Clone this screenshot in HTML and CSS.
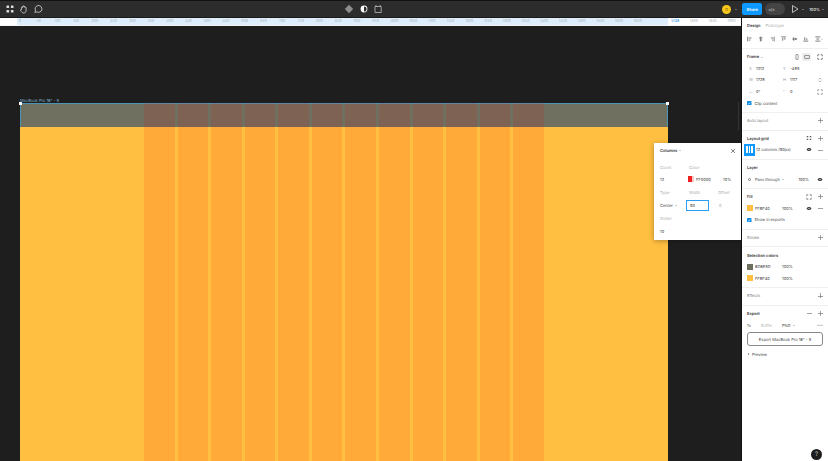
FILE: index.html
```html
<!DOCTYPE html>
<html lang="en">
<head>
  <meta charset="UTF-8">
  <title>MacBook Pro 16" - 5</title>
  <link rel="stylesheet" href="styles.css">
</head>
<body>
<div class="app">
  <header class="toolbar">
    <div class="tools">
      <svg class="ic" viewBox="0 0 10 10"><g fill="#ddd"><rect x="1.500" y="1.500" width="2.600" height="2.600" rx=".6"/><rect x="5.900" y="1.500" width="2.600" height="2.600" rx=".6"/><rect x="1.500" y="5.900" width="2.600" height="2.600" rx=".6"/><rect x="5.900" y="5.900" width="2.600" height="2.600" rx=".6"/></g></svg>
      <svg class="ic" viewBox="0 0 10 10"><path d="M2.500 5.500V3.600c0-.8 1-.8 1.100 0V2.400c0-.8 1.200-.8 1.200 0v.6c0-.8 1.200-.8 1.200 0v.7c0-.7 1.100-.7 1.100 0v2.500C7.100 8 6 9 4.800 9 3.200 9 2.600 8 1.500 6.400c-.4-.7.500-1.200 1-.9z" fill="none" stroke="#ddd" stroke-width=".8"/></svg>
      <svg class="ic" viewBox="0 0 10 10"><path d="M1.800 8.400l.7-1.900a3.400 3.400 0 1 1 1.200 1.300z" fill="none" stroke="#ddd" stroke-width=".8"/></svg>
    </div>
    <div class="tools center">
      <svg class="ic" viewBox="0 0 10 10"><path d="M5 .8L9.200 5 5 9.200.8 5z" fill="#8c8c8c"/></svg>
      <svg class="ic" viewBox="0 0 10 10"><circle cx="5" cy="5" r="3.400" fill="#fff"/><path d="M5 2.400a2.600 2.600 0 0 1 0 5.200z" fill="#2c2c2c"/></svg>
      <svg class="ic" viewBox="0 0 10 10"><path d="M2 2.500h6.200v6H2z" fill="none" stroke="#bbb" stroke-width=".8"/><path d="M3 1v2M7.200 1v2" stroke="#bbb" stroke-width=".8"/></svg>
    </div>
    <div class="session">
      <span class="avatar">D</span>
      <span class="caret light"></span>
      <span class="share">Share</span>
      <span class="code">&lt;/&gt;</span>
      <svg class="ic play" viewBox="0 0 10 10"><path d="M2.500 1.500L8 5 2.500 8.500z" fill="none" stroke="#ddd" stroke-width=".8"/></svg>
      <span class="caret light"></span>
      <span class="zoom">100%</span>
      <span class="caret light"></span>
    </div>
  </header>

  <div class="workspace">
    <div class="stage">
      <div class="ruler">
        <span>0</span><span>50</span><span>100</span><span>150</span><span>200</span><span>250</span><span>300</span><span>350</span><span>400</span><span>450</span><span>500</span><span>550</span><span>600</span><span>650</span><span>700</span><span>750</span><span>800</span><span>850</span><span>900</span><span>950</span><span>1000</span><span>1050</span><span>1100</span><span>1150</span><span>1200</span><span>1250</span><span>1300</span><span>1350</span><span>1400</span><span>1450</span><span>1500</span><span>1550</span><span>1600</span><span>1650</span><span></span><span class="current">1728</span><span>1800</span><span>1850</span><span>1900</span>
      </div>
      <main class="canvas">
        <div class="frame-label">MacBook Pro 16" - 5</div>
        <div class="frame">
          <div class="frame-band"></div>
          <div class="grid-overlay">
            <i></i><i></i><i></i><i></i><i></i><i></i><i></i><i></i><i></i><i></i><i></i><i></i>
          </div>
          <b class="handle left"></b>
          <b class="handle right"></b>
        </div>
        <div class="scrollbar"></div>

        <div class="dialog">
          <div class="dialog-head">
            <span class="strong">Columns <span class="caret"></span></span>
            <svg class="ic-s" viewBox="0 0 8 8"><path d="M1.500 1.500l5 5M6.500 1.500l-5 5" stroke="#333" stroke-width=".8"/></svg>
          </div>
          <div class="dialog-grid">
            <span class="muted">Count</span><span class="muted wide">Color</span>
            <span>12</span>
            <span class="color-cell wide"><span class="split-swatch"></span><span class="hex">FF0000</span><span>10%</span></span>
            <span class="muted">Type</span><span class="muted">Width</span><span class="muted">Offset</span>
            <span>Center <span class="caret"></span></span><span class="input">90</span><span class="muted offset">0</span>
            <span class="muted full">Gutter</span>
            <span class="full">10</span>
          </div>
        </div>
      </main>
    </div>

    <aside class="panel">
      <div class="tabs"><span class="strong">Design</span><span class="muted">Prototype</span></div>
      <div class="aligns sec">
        <svg viewBox="0 0 8 8"><path d="M1 .5v7M2.500 2.500h4M2.500 5.500h2.500" stroke="#444" stroke-width="1"/></svg>
        <svg viewBox="0 0 8 8"><path d="M4 .5v7M1.500 2.500h5M2.500 5.500h3" stroke="#444" stroke-width="1"/></svg>
        <svg viewBox="0 0 8 8"><path d="M7 .5v7M1.500 2.500h4M3 5.500h2.500" stroke="#444" stroke-width="1"/></svg>
        <svg viewBox="0 0 8 8"><path d="M.5 1h7M2.500 2.500v4M5.500 2.500v2.500" stroke="#444" stroke-width="1"/></svg>
        <svg viewBox="0 0 8 8"><path d="M.5 4h7M2.500 1.500v5M5.500 2.500v3" stroke="#444" stroke-width="1"/></svg>
        <svg viewBox="0 0 8 8"><path d="M.5 7h7M2.500 1.500v4M5.500 3v2.500" stroke="#444" stroke-width="1"/></svg>
        <svg class="wide-ic" viewBox="0 0 12 8"><path d="M.5 1h7M.5 7h7M2 4h4" stroke="#444" stroke-width="1"/><path d="M9 3.500l1.200 1.200 1.200-1.200" fill="none" stroke="#666" stroke-width=".6"/></svg>
      </div>

      <section class="sec">
        <div class="row head">
          <span class="strong">Frame <span class="caret"></span></span>
          <span class="end">
            <svg viewBox="0 0 8 8"><rect x="2.500" y=".8" width="3" height="6.400" rx=".5" fill="none" stroke="#444" stroke-width=".7"/></svg>
            <span class="pressed"><svg viewBox="0 0 8 8"><rect x=".8" y="2" width="6.400" height="4" rx=".5" fill="none" stroke="#444" stroke-width=".7"/></svg></span>
            <svg class="gap-l" viewBox="0 0 8 8"><path d="M1 3V1h2M5 1h2v2M7 5v2H5M3 7H1V5" fill="none" stroke="#444" stroke-width=".9"/></svg>
          </span>
        </div>
        <div class="row field-row"><span class="field"><em>X</em>1212</span><span class="field"><em>Y</em>-485</span></div>
        <div class="row field-row"><span class="field"><em>W</em>1728</span><span class="field"><em>H</em>1117</span>
          <svg class="end" viewBox="0 0 8 8"><path d="M2.500 3L4 1.500 5.500 3M2.500 5L4 6.500 5.500 5" fill="none" stroke="#555" stroke-width=".7"/></svg></div>
        <div class="row field-row"><span class="field"><em>∟</em>0°</span><span class="field"><em>⌜</em>0</span>
          <svg class="end" viewBox="0 0 8 8"><path d="M1 3V1h2M5 1h2v2M7 5v2H5M3 7H1V5" fill="none" stroke="#555" stroke-width=".7"/></svg></div>
        <div class="row"><svg class="check" viewBox="0 0 6 6"><rect width="6" height="6" rx=".8" fill="#0d8ce9"/><path d="M1.300 3l1.200 1.200 2.200-2.400" fill="none" stroke="#fff" stroke-width=".8"/></svg><span>Clip content</span></div>
      </section>

      <section class="sec"><div class="row head"><span class="muted-dark">Auto layout</span><span class="end plus"></span></div></section>

      <section class="sec">
        <div class="row head"><span class="strong">Layout grid</span>
          <span class="end">
            <svg class="gap-r" viewBox="0 0 8 8"><g fill="#444"><rect x="1" y="1.500" width="2" height="1.500"/><rect x="5" y="1.500" width="2" height="1.500"/><rect x="1" y="5" width="2" height="1.500"/><rect x="5" y="5" width="2" height="1.500"/></g></svg>
            <span class="plus"></span>
          </span>
        </div>
        <div class="row grid-row">
          <span class="grid-tile"><i></i><i></i><i></i></span><span>12 columns (90px)</span>
          <span class="end"><svg class="eye gap-r" viewBox="0 0 10 8"><path d="M.8 4C2 2 3.500 1.500 5 1.500S8 2 9.200 4C8 6 6.500 6.500 5 6.500S2 6 .8 4z" fill="#444"/><circle cx="5" cy="4" r="1" fill="#fff"/></svg><span class="minus"></span></span>
        </div>
      </section>

      <section class="sec">
        <div class="row head"><span class="strong">Layer</span></div>
        <div class="row">
          <span class="ring"></span><span>Pass through <span class="caret"></span></span>
          <span class="end"><span class="gap-r8">100%</span><svg class="eye" viewBox="0 0 10 8"><path d="M.8 4C2 2 3.500 1.500 5 1.500S8 2 9.200 4C8 6 6.500 6.500 5 6.500S2 6 .8 4z" fill="#444"/><circle cx="5" cy="4" r="1" fill="#fff"/></svg></span>
        </div>
      </section>

      <section class="sec">
        <div class="row head"><span class="strong">Fill</span>
          <span class="end">
            <svg class="gap-r" viewBox="0 0 8 8"><path d="M1 3V1h2M5 1h2v2M7 5v2H5M3 7H1V5" fill="none" stroke="#444" stroke-width=".8"/></svg>
            <span class="plus"></span>
          </span>
        </div>
        <div class="row">
          <span class="swatch orange"></span><span class="hex-w">FFBF40</span><span>100%</span>
          <span class="end"><svg class="eye gap-r" viewBox="0 0 10 8"><path d="M.8 4C2 2 3.500 1.500 5 1.500S8 2 9.200 4C8 6 6.500 6.500 5 6.500S2 6 .8 4z" fill="#444"/><circle cx="5" cy="4" r="1" fill="#fff"/></svg><span class="minus"></span></span>
        </div>
        <div class="row"><svg class="check" viewBox="0 0 6 6"><rect width="6" height="6" rx=".8" fill="#0d8ce9"/><path d="M1.300 3l1.200 1.200 2.200-2.400" fill="none" stroke="#fff" stroke-width=".8"/></svg><span>Show in exports</span></div>
      </section>

      <section class="sec"><div class="row head"><span class="muted-dark">Stroke</span><span class="end plus"></span></div></section>

      <section class="sec">
        <div class="row head"><span class="strong">Selection colors</span></div>
        <div class="row"><span class="swatch olive"></span><span class="hex-w">6D6E5D</span><span>100%</span></div>
        <div class="row"><span class="swatch orange"></span><span class="hex-w">FFBF40</span><span>100%</span></div>
      </section>

      <section class="sec"><div class="row head"><span class="muted-dark">Effects</span><span class="end plus"></span></div></section>

      <section class="export">
        <div class="row head"><span class="strong">Export</span><span class="end"><span class="minus gap-r"></span><span class="plus"></span></span></div>
        <div class="row">
          <span class="scale">1x</span><span class="muted suffix">Suffix</span><span>PNG <span class="caret"></span></span>
          <span class="end dots">•••</span>
        </div>
        <div class="export-btn">Export MacBook Pro 16" - 5</div>
        <div class="row preview"><span class="tri"></span>Preview</div>
      </section>
      <span class="help">?</span>
    </aside>
  </div>
</div>
</body>
</html>
```

FILE: styles.css
```css
* {
  box-sizing: border-box;
}
html, body {
  margin: 0;
  height: 100%;
  overflow: hidden;
}
body {
  font-family: Inter, "Liberation Sans", sans-serif;
  font-size: 4px;
  color: #444;
  text-rendering: geometricPrecision;
}
.app {
  display: flex;
  flex-direction: column;
  height: 461px;
}

/* toolbar */
.toolbar {
  flex: 0 0 18px;
  background: #2c2c2c;
  border-top: 1px solid #111;
  border-bottom: 1px solid #1a1a1a;
  display: flex;
  align-items: center;
  padding: 0 0 0 5px;
}
.tools {
  display: flex;
  gap: 4px;
}
.tools.center {
  margin-left: 301px;
  gap: 4.500px;
}
.ic {
  width: 10px;
  height: 10px;
}
.session {
  margin-left: auto;
  display: flex;
  align-items: center;
  color: #eee;
  padding-right: 4px;
}
.avatar {
  width: 9px;
  height: 9px;
  border-radius: 50%;
  background: #f7c818;
  color: #7a6000;
  display: flex;
  align-items: center;
  justify-content: center;
  margin-right: 3px;
}
.share {
  width: 20px;
  height: 12px;
  margin-left: 5px;
  border-radius: 2px;
  background: #0d99ff;
  color: #fff;
  font-weight: 600;
  display: flex;
  align-items: center;
  justify-content: center;
}
.code {
  width: 20px;
  height: 12px;
  margin-left: 3px;
  border-radius: 6px;
  background: #444;
  padding-left: 3px;
  display: flex;
  align-items: center;
}
.play {
  margin-left: 5px;
  margin-right: 1px;
}
.zoom {
  margin-left: 5px;
  font-weight: 500;
  margin-right: 1px;
}
.caret {
  display: inline-block;
  width: 0;
  height: 0;
  border: 1.200px solid transparent;
  border-top: 1.400px solid #999;
  border-bottom: 0;
  vertical-align: middle;
  margin-left: 1px;
}
.caret.light {
  border-top-color: #aaa;
}

/* ruler + canvas */
.workspace {
  flex: 1;
  display: flex;
  min-height: 0;
}
.stage {
  flex: 1;
  min-width: 0;
  display: flex;
  flex-direction: column;
}
.ruler {
  flex: 0 0 8px;
  display: flex;
  padding-left: 10.640px;
  background: linear-gradient(to right, #fff 17px, #deedfb 17px, #deedfb 668px, #fff 668px);
  border-bottom: 1px solid #f4f4f4;
  font-size: 3.600px;
  color: #a6b0b8;
  overflow: hidden;
  line-height: 7px;
}
.ruler span {
  flex: 0 0 18.720px;
  text-align: center;
}
.ruler .current {
  color: #1b8fe8;
  font-weight: 600;
}
.canvas {
  flex: 1;
  background: #1e1e1e;
  position: relative;
  overflow: hidden;
}
.frame-label {
  position: absolute;
  left: 20px;
  top: 72px;
  font-size: 4px;
  color: #7fb2cf;
  line-height: 5px;
}
.frame {
  position: absolute;
  left: 20px;
  top: 77px;
  width: 648px;
  height: 400px;
  background: #ffbf40;
}
.frame-band {
  height: 24px;
  background: #6f705f;
  border: 1px solid #4c94b4;
  border-bottom-color: #6f705f;
}
.grid-overlay {
  position: absolute;
  left: 124px;
  top: 0;
  width: 400px;
  height: 100%;
  display: flex;
  justify-content: space-between;
}
.grid-overlay i {
  width: 30.500px;
  background: rgba(255, 0, 0, .11);
}
.handle {
  position: absolute;
  top: -1px;
  width: 3px;
  height: 3px;
  background: #fff;
}
.handle.left {
  left: -1px;
}
.handle.right {
  right: -1px;
}
.scrollbar {
  position: absolute;
  right: 2px;
  top: 76px;
  width: 1px;
  height: 28px;
  background: #333;
}

/* columns dialog */
.dialog {
  position: absolute;
  right: 0;
  top: 117px;
  width: 87px;
  height: 97px;
  background: #fff;
  box-shadow: 0 1px 5px rgba(0, 0, 0, .3);
  padding: 0 6px;
}
.dialog-head {
  height: 15px;
  display: flex;
  align-items: center;
  justify-content: space-between;
  margin-right: -1px;
}
.ic-s {
  width: 6px;
  height: 6px;
}
.dialog-grid {
  margin-top: 3px;
  display: grid;
  grid-template-columns: 29px 29px 1fr;
  grid-template-rows: 12px 12px 14px 12px 14px 12px;
  align-items: center;
}
.wide {
  grid-column: span 2;
}
.full {
  grid-column: 1 / -1;
}
.color-cell {
  display: flex;
  align-items: center;
}
.split-swatch {
  width: 6px;
  height: 6px;
  margin-left: -1px;
  background: linear-gradient(to right, #ee2020 60%, #fbc9c9 60%);
}
.hex {
  margin-left: 2px;
  width: 27px;
}
.input {
  width: 23px;
  height: 11px;
  margin-left: -3px;
  border: 1px solid #2b9cf0;
  display: flex;
  align-items: center;
  padding-left: 3px;
}
.offset {
  padding-left: 1px;
}

/* right panel */
.panel {
  width: 87px;
  flex: none;
  background: #fff;
  border-left: 1px solid #111;
  position: relative;
  overflow: hidden;
}
.tabs {
  height: 14px;
  display: flex;
  align-items: center;
  gap: 5px;
  padding: 0 5px;
}
.aligns {
  height: 17px;
  display: flex;
  align-items: center;
  gap: 5.700px;
  padding: 0 5px 3px;
}
.aligns svg {
  width: 6px;
  height: 6px;
}
.aligns .wide-ic {
  width: 9px;
}
.sec {
  border-bottom: 1px solid #f0f0f0;
  padding-bottom: 3px;
}
.row {
  height: 11.600px;
  display: flex;
  align-items: center;
  padding: 0 5px;
}
.row.head {
  margin-top: 2px;
}
.row svg {
  width: 6px;
  height: 6px;
}
.end {
  margin-left: auto;
  display: flex;
  align-items: center;
}
.gap-r {
  margin-right: 6px;
}
.gap-r8 {
  margin-right: 8px;
}
.gap-l {
  margin-left: 6px;
}
.pressed {
  width: 9px;
  height: 8px;
  margin-left: 2px;
  background: #eee;
  border-radius: 1px;
  display: flex;
  align-items: center;
  justify-content: center;
}
.field {
  width: 34px;
}
.field em {
  display: inline-block;
  font-style: normal;
  width: 9px;
  padding-left: 2px;
  color: #999;
}
.row .check {
  width: 4.500px;
  height: 4.500px;
  margin-right: 3px;
}
.plus, .minus {
  display: inline-block;
  width: 5px;
  height: 5px;
  background: linear-gradient(#777, #777) center / 100% .7px no-repeat;
}
.plus {
  background: linear-gradient(#777, #777) center / 100% .7px no-repeat, linear-gradient(#777, #777) center / .7px 100% no-repeat;
}
.grid-row {
  padding-left: 2px;
}
.grid-tile {
  width: 11px;
  height: 12px;
  background: #0d99ff;
  display: flex;
  align-items: center;
  justify-content: center;
  gap: 1px;
  margin-right: 1px;
}
.grid-tile i {
  width: 1.800px;
  height: 7px;
  background: #fff;
}
.row .eye {
  width: 6px;
  height: 5px;
}
.ring {
  width: 3px;
  height: 3px;
  border: .6px solid #777;
  border-radius: 50%;
  margin: 0 4px 0 1px;
}
.swatch {
  width: 6px;
  height: 6px;
  margin-right: 2px;
}
.swatch.orange {
  background: #ffbf40;
}
.swatch.olive {
  background: #6d6e5d;
}
.hex-w {
  width: 27px;
}
.muted {
  color: #aaa;
}
.muted-dark {
  color: #777;
}
.strong {
  font-weight: 600;
  color: #333;
}
.scale {
  width: 14px;
}
.suffix {
  width: 21px;
}
.dots {
  font-size: 3px;
  letter-spacing: .3px;
  color: #333;
}
.export-btn {
  height: 14px;
  margin: 1.500px 5px 0;
  border: .8px solid #888;
  border-radius: 3px;
  display: flex;
  align-items: center;
  justify-content: center;
}
.preview {
  margin-top: 2px;
  padding-left: 6px;
  gap: 3px;
}
.tri {
  width: 0;
  height: 0;
  border: 1.200px solid transparent;
  border-left: 1.600px solid #333;
  border-right: 0;
}
.help {
  position: absolute;
  right: 6px;
  bottom: 1px;
  width: 11px;
  height: 11px;
  border-radius: 50%;
  background: #1e1e1e;
  color: #ccc;
  display: flex;
  align-items: center;
  justify-content: center;
  font-size: 6px;
}
```
